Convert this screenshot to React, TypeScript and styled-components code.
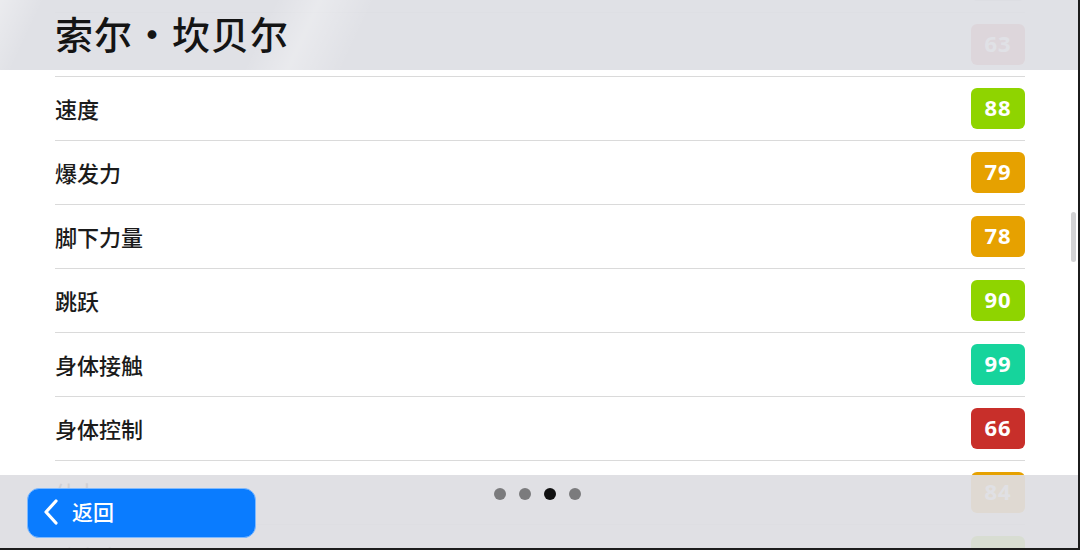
import { FunctionComponent } from "react";
import styled, { createGlobalStyle } from "styled-components";

const GlobalStyle = createGlobalStyle`
  html, body {
    margin: 0;
    padding: 0;
    background: #1c1c1c;
  }
  body {
    font-family: "Noto Sans CJK SC", "Noto Sans", sans-serif;
  }
`

const colors = {
  green: "#8fd400",
  orange: "#e6a100",
  teal: "#16d49c",
  red: "#c82f2a",
  grey: "#b9b9bd",
}

interface Stat {
  label: string
  value: number
  color: string
}

const stats: Stat[] = [
  { label: "头球", value: 72, color: colors.grey },
  { label: "", value: 63, color: colors.red },
  { label: "速度", value: 88, color: colors.green },
  { label: "爆发力", value: 79, color: colors.orange },
  { label: "脚下力量", value: 78, color: colors.orange },
  { label: "跳跃", value: 90, color: colors.green },
  { label: "身体接触", value: 99, color: colors.teal },
  { label: "身体控制", value: 66, color: colors.red },
  { label: "体力", value: 84, color: colors.orange },
  { label: "防守意识", value: 91, color: colors.green },
]

const Frame = styled.div`
  position: relative;
  width: 1078px;
  height: 548px;
  overflow: hidden;
  background: #ffffff;
  border-right: 2px solid #1c1c1c;
  border-bottom: 2px solid #1c1c1c;
`

const List = styled.div`
  display: flex;
  flex-direction: column;
  margin-top: -51px;
  padding: 0 53px 0 55px;
`

const Row = styled.div`
  display: flex;
  align-items: center;
  justify-content: space-between;
  height: 63px;
  border-bottom: 1px solid #dadada;
`

const Label = styled.span`
  font-size: 22px;
  font-weight: 500;
  line-height: 1;
  color: #1b1b1b;
  padding-bottom: 2px;
`

const Badge = styled.span<{ $color: string }>`
  display: flex;
  align-items: center;
  justify-content: center;
  width: 54px;
  height: 41px;
  border-radius: 6px;
  background: ${({ $color }) => $color};
  color: #ffffff;
  font-family: "Noto Sans", sans-serif;
  font-weight: 700;
  font-size: 22px;
  line-height: 1;
  letter-spacing: 1px;
  padding-bottom: 3px;
  box-sizing: border-box;
`

const Header = styled.div`
  position: absolute;
  top: 0;
  left: 0;
  right: 0;
  height: 70px;
  display: flex;
  align-items: center;
  padding-left: 55px;
  background:
    linear-gradient(115deg,
      rgba(255,255,255,0.35) 0px,
      rgba(255,255,255,0) 40px,
      rgba(255,255,255,0) 250px,
      rgba(255,255,255,0.3) 290px,
      rgba(255,255,255,0) 340px),
    rgba(222, 223, 229, 0.95);
`

const Title = styled.h1`
  margin: 0 0 6px;
  font-size: 38px;
  font-weight: 500;
  color: #141414;
  letter-spacing: 1px;
`

const Scrollbar = styled.div`
  position: absolute;
  top: 212px;
  right: 2px;
  width: 5px;
  height: 50px;
  border-radius: 3px;
  background: #d2d2d4;
`

const BottomBar = styled.div`
  position: absolute;
  left: 0;
  right: 0;
  bottom: 0;
  height: 73px;
  display: grid;
  grid-template-columns: 1fr auto 1fr;
  align-items: start;
  padding-top: 13px;
  box-sizing: border-box;
  background: rgba(222, 222, 226, 0.93);
`

const BackButton = styled.button`
  display: flex;
  align-items: center;
  gap: 12px;
  justify-self: start;
  margin-left: 27px;
  width: 229px;
  height: 50px;
  padding: 0 14px 3px;
  border: 1px solid #7fbaff;
  border-radius: 12px;
  background: #0a7cff;
  color: #ffffff;
  font-family: "Noto Sans CJK SC", sans-serif;
  font-size: 21px;
  font-weight: 500;
  line-height: 1;
  cursor: pointer;
  box-sizing: border-box;
`

const Dots = styled.div`
  display: flex;
  gap: 13px;
  margin-left: -4px;
`

const Dot = styled.span<{ $active?: boolean }>`
  width: 12px;
  height: 12px;
  border-radius: 50%;
  background: ${({ $active }) => ($active ? "#111111" : "#7b7b7d")};
`

const Chevron: FunctionComponent = () => (
  <svg width="18" height="28" viewBox="0 0 18 28" fill="none">
    <path d="M14 3 L4 14 L14 25" stroke="#ffffff" strokeWidth="3.2" strokeLinecap="round" strokeLinejoin="round" />
  </svg>
)

export default function App() {
  return (
    <>
      <GlobalStyle />
      <Frame>
        <List>
          {stats.map((s, i) => (
            <Row key={i}>
              <Label>{s.label}</Label>
              <Badge $color={s.color}>{s.value}</Badge>
            </Row>
          ))}
        </List>
        <Header>
          <Title>索尔·坎贝尔</Title>
        </Header>
        <Scrollbar />
        <BottomBar>
          <BackButton>
            <Chevron />
            返回
          </BackButton>
          <Dots>
            <Dot />
            <Dot />
            <Dot $active />
            <Dot />
          </Dots>
        </BottomBar>
      </Frame>
    </>
  )
}
